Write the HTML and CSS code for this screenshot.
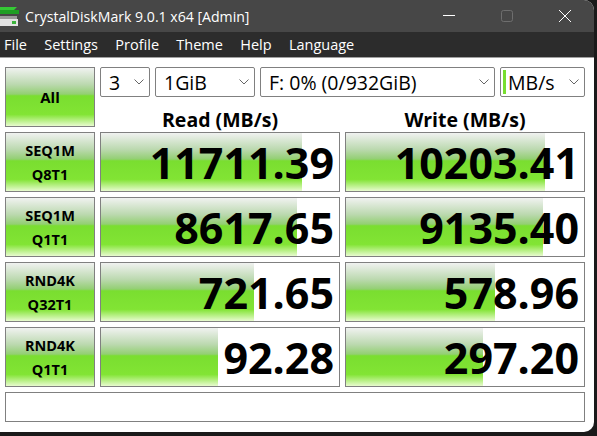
FILE: index.html
```html
<!DOCTYPE html>
<html>
<head>
    <meta charset="UTF-8">
    <title>CrystalDiskMark</title>
    <link rel="stylesheet" href="styles.css">
</head>
<body>
    <div class="window">
        <div class="title-bar">
            <svg class="app-icon" width="21" height="26" viewBox="0 0 21 26">
                <path d="M0 6h17l-3 3H0z" fill="#35c935"/>
                <path d="M0 9h19v4H0z" fill="#1f9e24"/>
                <path d="M0 15h17v3H0z" fill="#9a9a9a"/>
                <path d="M0 18h18v7H0z" fill="#e4e4e4"/>
                <path d="M12 20h4v3h-4z" fill="#3cb43c"/>
            </svg>
            <span class="title">CrystalDiskMark 9.0.1 x64 [Admin]</span>
            <div class="window-buttons">
                <svg class="win-min" width="12" height="12" viewBox="0 0 12 12"><path d="M0 5.5h12" stroke="#fff" stroke-width="1"/></svg>
                <svg width="12" height="12" viewBox="0 0 12 12"><rect x=".5" y=".5" width="11" height="11" rx="2" fill="none" stroke="#6e6e6e"/></svg>
                <svg width="12" height="12" viewBox="0 0 12 12"><path d="M0 0l12 12M12 0L0 12" stroke="#fff" stroke-width="1"/></svg>
            </div>
        </div>
        <div class="menu-bar">
            <span>File</span>
            <span>Settings</span>
            <span>Profile</span>
            <span>Theme</span>
            <span>Help</span>
            <span>Language</span>
        </div>
        <div class="content">
            <div class="grid">
                <button class="test-btn all-btn">All</button>
                <div class="selects">
                    <div class="select select-count">3<svg class="chevron" width="10" height="6" viewBox="0 0 10 6"><path d="M.5.5L5 5 9.5.5" fill="none" stroke="#666"/></svg></div>
                    <div class="select select-size">1GiB<svg class="chevron" width="10" height="6" viewBox="0 0 10 6"><path d="M.5.5L5 5 9.5.5" fill="none" stroke="#666"/></svg></div>
                    <div class="select select-drive">F: 0% (0/932GiB)<svg class="chevron" width="10" height="6" viewBox="0 0 10 6"><path d="M.5.5L5 5 9.5.5" fill="none" stroke="#666"/></svg></div>
                    <div class="select select-unit"><i class="unit-mark"></i>MB/s<svg class="chevron" width="10" height="6" viewBox="0 0 10 6"><path d="M.5.5L5 5 9.5.5" fill="none" stroke="#666"/></svg></div>
                </div>
                <div class="col-head">Read (MB/s)</div>
                <div class="col-head">Write (MB/s)</div>

                <button class="test-btn"><span>SEQ1M</span><span>Q8T1</span></button>
                <div class="cell"><div class="bar" style="width: 84.5%"></div><span class="value">11711.39</span></div>
                <div class="cell"><div class="bar" style="width: 83.6%"></div><span class="value">10203.41</span></div>

                <button class="test-btn"><span>SEQ1M</span><span>Q1T1</span></button>
                <div class="cell"><div class="bar" style="width: 82.4%"></div><span class="value">8617.65</span></div>
                <div class="cell"><div class="bar" style="width: 82.8%"></div><span class="value">9135.40</span></div>

                <button class="test-btn"><span>RND4K</span><span>Q32T1</span></button>
                <div class="cell"><div class="bar" style="width: 64.3%"></div><span class="value">721.65</span></div>
                <div class="cell"><div class="bar" style="width: 62.6%"></div><span class="value">578.96</span></div>

                <button class="test-btn"><span>RND4K</span><span>Q1T1</span></button>
                <div class="cell"><div class="bar" style="width: 49.2%"></div><span class="value">92.28</span></div>
                <div class="cell"><div class="bar" style="width: 57.6%"></div><span class="value">297.20</span></div>

                <div class="status"></div>
            </div>
        </div>
    </div>
</body>
</html>
```

FILE: styles.css
```css
:root {
    --border-color: #808080;
    --bar-gradient: linear-gradient(to bottom, #f0f2f0 0%, #bcd9b0 28%, #93cf73 45%, #7ade30 48%, #82e434 80%, #e8fbcf 100%);
}
html, body {
    margin: 0;
    height: 100%;
    background-color: #1a1a1a;
    overflow: hidden;
}
body {
    font-family: "Open Sans", "Noto Sans", sans-serif;
}
.window {
    width: 594px;
    height: 432px;
    background-color: #fff;
    border-radius: 0 10px 10px 0;
    overflow: hidden;
}
.title-bar {
    display: flex;
    align-items: center;
    height: 32px;
    background-color: #474747;
    color: #fff;
    font-size: 14.1px;
}
.app-icon { flex-shrink: 0; margin-top: -4px; }
.title { margin-left: 4px; }
.window-buttons {
    display: flex;
    gap: 46px;
    margin-left: auto;
    margin-right: 23px;
}
.menu-bar {
    display: flex;
    align-items: center;
    gap: 17.3px;
    height: 25px;
    padding-left: 4px;
    background-color: #2c2c2c;
    border-bottom: 1px solid #a0a0a0;
    color: #fff;
    font-size: 14.5px;
}
.content { padding: 9px 0 0 5px; }
.grid {
    display: grid;
    grid-template-columns: 90px 240px 240px;
    grid-template-rows: 30px 25px 60px 60px 60px 60px 30px;
    gap: 5px;
}
.test-btn {
    display: flex;
    flex-direction: column;
    align-items: center;
    justify-content: space-between;
    padding: 8px 0 6px;
    border: 1px solid var(--border-color);
    background: var(--bar-gradient);
    font-family: inherit;
    font-size: 14.5px;
    font-weight: 700;
    line-height: 20px;
    color: #000;
}
.all-btn { grid-row: 1 / span 2; justify-content: center; padding: 0; font-size: 15px; }
.selects {
    grid-column: 2 / span 2;
    display: flex;
    gap: 5px;
}
.select {
    display: flex;
    align-items: center;
    justify-content: space-between;
    box-sizing: border-box;
    height: 30px;
    padding: 0 5px 0 8px;
    border: 1px solid var(--border-color);
    border-radius: 2px;
    font-size: 19.5px;
    color: #000;
}
.select-count { width: 50px; }
.select-size { width: 100px; }
.select-drive { width: 235px; }
.select-unit { width: 85px; padding-left: 2px; }
.unit-mark {
    width: 3px;
    height: 24px;
    margin-right: 2px;
    background-color: #78de30;
}
.select-unit .chevron { margin-left: auto; }
.col-head {
    height: 25px;
    font-size: 19.5px;
    font-weight: 700;
    line-height: 35px;
    text-align: center;
}
.cell {
    position: relative;
    display: flex;
    justify-content: flex-end;
    align-items: center;
    box-sizing: border-box;
    border: 1px solid var(--border-color);
    padding-right: 5px;
}
.bar {
    position: absolute;
    left: 0;
    top: 0;
    bottom: 0;
    background: var(--bar-gradient);
}
.value {
    position: relative;
    font-size: 43px;
    font-weight: 700;
    line-height: 1;
    color: #000;
}
.status {
    grid-column: 1 / -1;
    border: 1px solid var(--border-color);
}
```
